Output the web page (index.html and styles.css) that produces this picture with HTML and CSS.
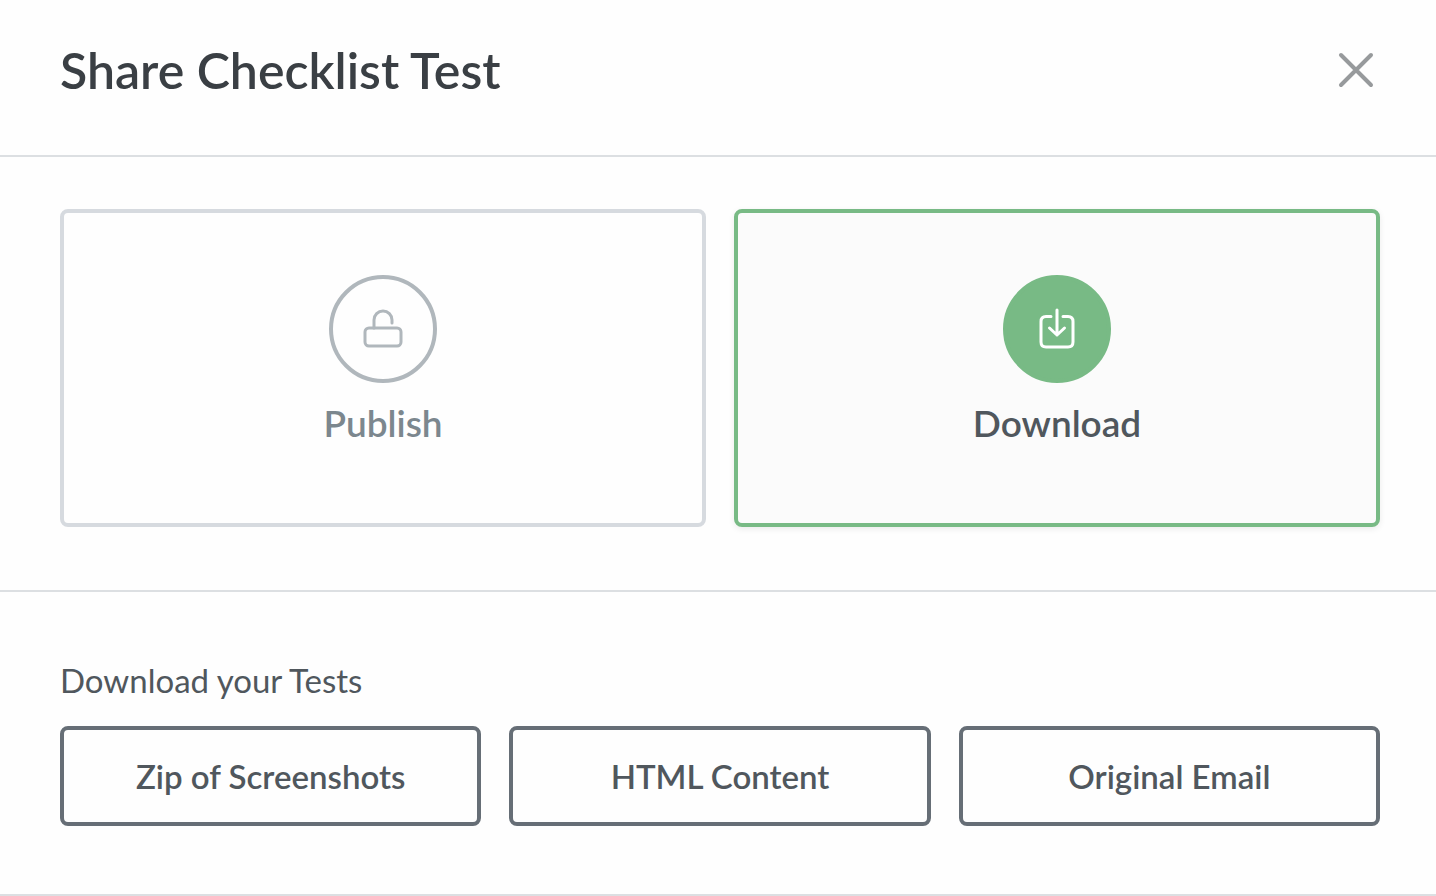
FILE: index.html
```
<!DOCTYPE html>
<html lang="en">
<head>
  <meta charset="UTF-8">
  <meta name="viewport" content="width=device-width, initial-scale=1.0">
  <title>Share Checklist Test</title>
  <link rel="stylesheet" href="styles.css">
</head>
<body>
  <main class="modal">
    <header class="modal-header">
      <h1>Share Checklist Test</h1>
      <button class="close" type="button" aria-label="Close">
        <svg width="36" height="36" viewBox="0 0 36 36">
          <path d="M3 3 L33 33 M33 3 L3 33"/>
        </svg>
      </button>
    </header>

    <section class="options">
      <button class="option" type="button">
        <span class="option-icon">
          <!-- open padlock -->
          <svg width="42" height="42" viewBox="0 0 42 42">
            <rect x="3" y="20" width="36" height="18" rx="4"/>
            <path d="M12 20 V12 A9 9 0 0 1 30 12 V15"/>
          </svg>
        </span>
        Publish
      </button>
      <button class="option active" type="button">
        <span class="option-icon">
          <!-- arrow into tray -->
          <svg width="42" height="42" viewBox="0 0 42 42">
            <path d="M15 8.500 H10 Q5 8.500 5 13.500 V34 Q5 39 10 39 H32 Q37 39 37 34 V13.500 Q37 8.500 32 8.500 H27"/>
            <path d="M21 2 V27 M13.500 20 L21 27 L28.500 20"/>
          </svg>
        </span>
        Download
      </button>
    </section>

    <section class="downloads">
      <h2>Download your Tests</h2>
      <div class="download-buttons">
        <button type="button">Zip of Screenshots</button>
        <button type="button">HTML Content</button>
        <button type="button">Original Email</button>
      </div>
    </section>
  </main>
</body>
</html>
```
FILE: styles.css
```
* {
  box-sizing: border-box;
}

body {
  margin: 0;
  background: #fefefe;
  color: #50575d;
  font-family: Lato, "Open Sans", sans-serif;
}

button {
  font-family: inherit;
  color: inherit;
  cursor: pointer;
}

svg {
  display: block;
  fill: none;
  stroke: currentColor;
  stroke-linecap: round;
  stroke-linejoin: round;
}

.modal-header {
  display: flex;
  justify-content: space-between;
  align-items: center;
  padding: 40px 62px 55px 60px;
  border-bottom: 2px solid #dcdfe2;
}

.modal-header h1 {
  margin: 0;
  font-size: 50px;
  line-height: 60px;
  font-weight: 600;
  color: #3a3f44;
}

.close {
  padding: 0;
  border: 0;
  background: none;
  color: #979a9c;
}

.close svg {
  stroke-width: 4;
}

.options {
  display: grid;
  grid-template-columns: 1fr 1fr;
  gap: 28px;
  padding: 52px 56px 63px 60px;
  border-bottom: 2px solid #dcdfe2;
}

.option {
  display: flex;
  flex-direction: column;
  align-items: center;
  gap: 18px;
  padding: 62px 20px 78px;
  border: 4px solid #d6dadf;
  border-radius: 8px;
  background: #fefefe;
  color: #7c878e;
  font-size: 37px;
  line-height: 44px;
  font-weight: 600;
}

.option-icon {
  display: flex;
  justify-content: center;
  align-items: center;
  width: 108px;
  height: 108px;
  border: 4px solid #b0b7bc;
  border-radius: 50%;
  color: #b0b7bc;
}

.option-icon svg {
  stroke-width: 3;
}

.option.active {
  border-color: #78ba85;
  background: #fbfbfb;
  color: #50575d;
  box-shadow: 0 2px 6px rgba(0, 0, 0, 0.08);
}

.active .option-icon {
  border-color: #78ba85;
  background: #78ba85;
  color: #fff;
}

.downloads {
  padding: 68px 56px 68px 60px;
  border-bottom: 2px solid #dcdfe2;
}

.downloads h2 {
  margin: 0 0 26px;
  font-size: 33px;
  line-height: 40px;
  font-weight: 400;
}

.download-buttons {
  display: grid;
  grid-template-columns: repeat(3, 1fr);
  gap: 28px;
}

.download-buttons button {
  padding: 26px 20px;
  border: 4px solid #666e76;
  border-radius: 8px;
  background: #fefefe;
  font-size: 33px;
  line-height: 40px;
  font-weight: 600;
}
```
